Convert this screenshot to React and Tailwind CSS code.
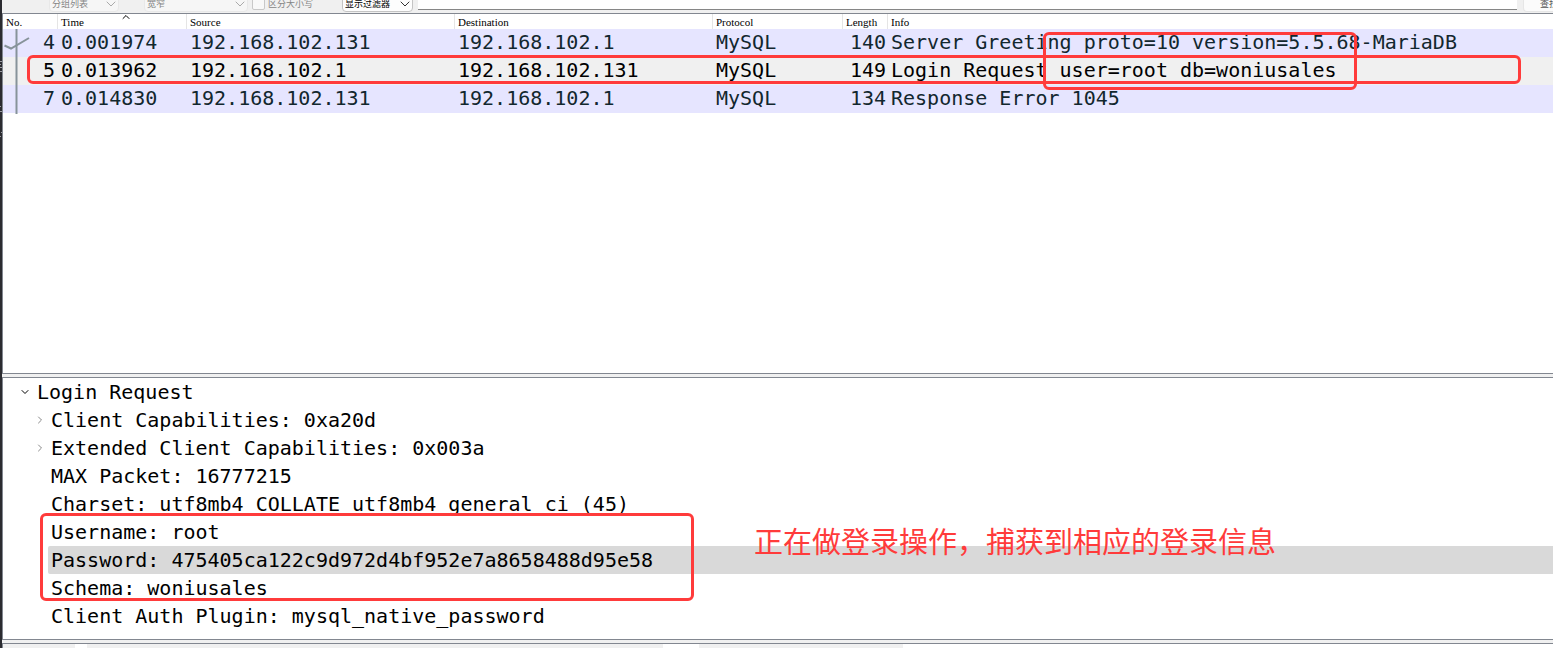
import { ChevronDown, ChevronRight, ChevronUp } from 'lucide-react';

const packets = [
  { no: 4, time: '0.001974', source: '192.168.102.131', destination: '192.168.102.1', protocol: 'MySQL', length: 140, info: 'Server Greeting proto=10 version=5.5.68-MariaDB' },
  { no: 5, time: '0.013962', source: '192.168.102.1', destination: '192.168.102.131', protocol: 'MySQL', length: 149, info: 'Login Request user=root db=woniusales', selected: true },
  { no: 7, time: '0.014830', source: '192.168.102.131', destination: '192.168.102.1', protocol: 'MySQL', length: 134, info: 'Response Error 1045' },
];

const fields = [
  { text: 'Client Capabilities: 0xa20d', expandable: true },
  { text: 'Extended Client Capabilities: 0x003a', expandable: true },
  { text: 'MAX Packet: 16777215' },
  { text: 'Charset: utf8mb4 COLLATE utf8mb4_general_ci (45)' },
  { text: 'Username: root' },
  { text: 'Password: 475405ca122c9d972d4bf952e7a8658488d95e58', selected: true },
  { text: 'Schema: woniusales' },
  { text: 'Client Auth Plugin: mysql_native_password' },
];

const columns = [
  { label: 'No.', width: 'w-[55px]' },
  { label: 'Time', width: 'w-[129px]', sorted: true },
  { label: 'Source', width: 'w-[268px]' },
  { label: 'Destination', width: 'w-[258px]' },
  { label: 'Protocol', width: 'w-[130px]' },
  { label: 'Length', width: 'w-[45px]' },
  { label: 'Info', width: '' },
];

function Dropdown({ label, className, disabled }) {
  return (
    <div className={`relative h-4 shrink-0 mb-px ${className}`}>
      <select
        aria-label={label}
        disabled={disabled}
        className={`block h-4 w-full appearance-none rounded-b-sm border px-[2px] text-[9px] leading-[14px] ${
          disabled ? 'border-[#e8e8e8] bg-[#f6f6f6] text-[#858585] opacity-100' : 'border-[#c4c4c4] bg-[#fdfdfd] text-black'
        }`}
      >
        <option>{label}</option>
      </select>
      <ChevronDown
        className={`absolute right-0 top-0 h-4 w-4 pointer-events-none ${disabled ? 'text-[#aaaaaa]' : 'text-[#333333]'}`}
        strokeWidth={1.5}
      />
    </div>
  );
}

function SearchBar() {
  return (
    <div className="flex h-[13px] items-end overflow-hidden bg-[#f0f0f0] pl-[47px] font-['Liberation_Serif','Noto_Sans_CJK_SC',serif]">
      <Dropdown label="分组列表" className="w-[70px] mr-[25px]" disabled />
      <Dropdown label="宽窄" className="w-[104px] mr-[4px]" disabled />
      <label className="mb-px mr-[29px] flex h-4 shrink-0 items-center gap-[3px] text-[9px] leading-4 text-[#858585]">
        <input type="checkbox" disabled className="mb-px h-[13px] w-[13px] appearance-none rounded-b-xs border border-[#c8c8c8] bg-[#f8f8f8]" />
        区分大小写
      </label>
      <Dropdown label="显示过滤器" className="w-[71px] mr-[5px]" />
      <input
        type="text"
        aria-label="显示过滤器"
        className="mb-[3px] h-4 min-w-0 flex-1 border-b border-[#868686] bg-white outline-none"
      />
      <button className="mb-px ml-[6px] h-4 w-[30px] shrink-0 overflow-hidden whitespace-nowrap rounded-bl-sm border-b border-l border-[#e6e6e6] bg-[#fbfbfb] pl-4 text-left text-[9px] leading-[14px] text-[#555555]">
        查找
      </button>
    </div>
  );
}

function PacketList() {
  return (
    <section className="relative h-[361px] overflow-hidden border-y border-l border-[#828790] bg-white">
      <table className="w-full table-fixed border-separate border-spacing-0">
        <colgroup>
          {columns.map((col) => (
            <col key={col.label} className={col.width} />
          ))}
        </colgroup>
        <thead>
          <tr className="h-[15px] font-['Liberation_Serif',serif] text-[11px] leading-[13px] text-black">
            {columns.map((col) => (
              <th key={col.label} className="relative border-r border-[#e5e5e5] p-0 pl-[3px] pt-0.5 text-left font-normal last:border-r-0">
                {col.label}
                {col.sorted && <ChevronUp className="absolute left-[62px] -top-[3px] h-3 w-3" strokeWidth={2} />}
              </th>
            ))}
          </tr>
        </thead>
        <tbody className="whitespace-pre text-[20px] leading-[26px]">
          {packets.map((p) => (
            <tr key={p.no} className={`h-7 align-top ${p.selected ? 'bg-[#f0f0f0] text-black' : 'bg-[#e6e5ff] text-[#12272e]'}`}>
              <td className="p-0 pr-[3px] text-right">{p.no}</td>
              <td className="p-0 pl-[3px]">{p.time}</td>
              <td className="p-0 pl-[3px]">{p.source}</td>
              <td className="p-0 pl-[3px]">{p.destination}</td>
              <td className="p-0 pl-[3px]">{p.protocol}</td>
              <td className="p-0 pr-[2px] text-right">{p.length}</td>
              <td className="p-0 pl-[3px]">{p.info}</td>
            </tr>
          ))}
        </tbody>
      </table>
      {/* conversation marker */}
      <svg className="absolute left-0 top-[15px] h-[85px] w-7" viewBox="0 0 28 85" fill="none" stroke="#87939a" strokeWidth="2">
        <path d="M13.5 0V85" />
        <path d="M1.5 16.5L8 19.5L26 9" />
      </svg>
    </section>
  );
}

function PacketDetails() {
  return (
    <section className="mt-[3px] h-[263px] border-y border-l border-[#828790] bg-white text-[20px] leading-7 text-black">
      <div className="flex items-center pl-4">
        <button aria-label="Login Request" className="flex w-[18px] justify-start">
          <ChevronDown className="h-3 w-3" strokeWidth={2} />
        </button>
        <span>Login Request</span>
      </div>
      <ul>
        {fields.map((f) => (
          <li key={f.text} className="flex whitespace-pre pl-[31px]">
            <span className="flex w-[14px] shrink-0 items-center">
              {f.expandable && (
                <button aria-label={f.text}>
                  <ChevronRight className="h-3 w-3 text-[#8a8a8a]" strokeWidth={2} />
                </button>
              )}
            </span>
            <span className={`flex-1 rounded-l-xs pl-[3px] ${f.selected ? 'bg-[#d9d9d9]' : ''}`}>{f.text}</span>
          </li>
        ))}
      </ul>
    </section>
  );
}

function BytesPane() {
  return (
    <section className="mt-[3px] flex h-[5px] border-l border-t border-[#828790] bg-white">
      <div className="w-[72px] bg-[#f0f0f0]" />
      <div className="ml-3 w-[576px] bg-[#f0f0f0]" />
      <div className="ml-9 w-[204px] bg-[#f0f0f0]" />
    </section>
  );
}

export default function App() {
  return (
    <div className="relative flex overflow-hidden bg-[#f0f0f0] font-['DejaVu_Sans_Mono','Noto_Sans_CJK_SC',monospace]">
      <div className="w-0.5 shrink-0 bg-[#2b2b30]">
        {/* edge of the window behind */}
        <svg className="h-[140px] w-0.5" viewBox="0 0 2 140" stroke="#9a9aa0" strokeWidth="1">
          <path d="M0 61.5H2M0 64.5H1M0 67.5H2M0 71.5H2M0 106.5H1M0 111.5H2M1 132.5H2M0 136.5H1" />
        </svg>
      </div>
      <main className="min-w-0 flex-1">
        <SearchBar />
        <PacketList />
        <PacketDetails />
        <BytesPane />
      </main>

      {/* annotations */}
      <div className="absolute left-[27px] top-[55px] h-[29px] w-[1494px] rounded-md border-3 border-[#ff3b3b]" />
      <div className="absolute left-[1043px] top-[32px] h-[58px] w-[314px] rounded-md border-3 border-[#ff3b3b]" />
      <div className="absolute left-[40px] top-[513px] h-[88px] w-[654px] rounded-md border-3 border-[#ff3b3b]" />
      <p className="absolute left-[754px] top-[520px] whitespace-nowrap font-['Noto_Sans_CJK_SC',sans-serif] text-[29px] leading-10 text-[#ff3b3b]">
        正在做登录操作，捕获到相应的登录信息
      </p>
    </div>
  );
}
